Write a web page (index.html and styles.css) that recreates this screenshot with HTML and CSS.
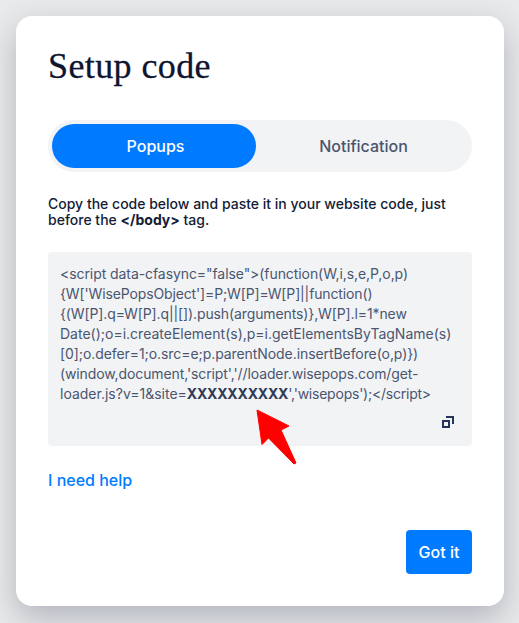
FILE: index.html
```html
<!DOCTYPE html>
<html lang="en">
<head>
<meta charset="utf-8">
<title>Setup code</title>
<link rel="stylesheet" href="styles.css">
</head>
<body>
<main class="card">
  <h1 class="title">Setup code</h1>
  <div class="tabs">
    <button class="tab tab-active">Popups</button>
    <button class="tab">Notification</button>
  </div>
  <p class="intro">Copy the code below and paste it in your website code, just before the <strong>&lt;/body&gt;</strong> tag.</p>
  <div class="code">
    <p class="code-text">
      <span class="code-line tight-s">&lt;script data-cfasync="false"&gt;(function(W,i,s,e,P,o,p)</span>
      <span class="code-line tight-l">{W['WisePopsObject']=P;W[P]=W[P]||function()</span>
      <span class="code-line tight-m">{(W[P].q=W[P].q||[]).push(arguments)},W[P].l=1*new</span>
      <span class="code-line">Date();o=i.createElement(s),p=i.getElementsByTagName(s)</span>
      <span class="code-line tight-s">[0];o.defer=1;o.src=e;p.parentNode.insertBefore(o,p)})</span>
      <span class="code-line tight-m">(window,document,'script','//loader.wisepops.com/get-</span>
      <span class="code-line">loader.js?v=1&amp;site=<b class="site">XXXXXXXXXX</b><span class="tight-x">','wisepops');&lt;/script&gt;</span></span>
    </p>
    <div class="copy-row">
      <svg class="copy-icon" width="12" height="12" viewBox="0 0 12 12" fill="none" stroke="#24335a" stroke-width="2"><rect x="1" y="5" width="6" height="6"/><path d="M4 1h7v7"/></svg>
    </div>
    <svg class="arrow" width="42" height="56" viewBox="0 0 42 56"><path d="M1 1 L33 17 L25 21 L40 54 L38 55 L12.500 29 L6 35.500 Z" fill="#ff0000" stroke="#ff0000" stroke-width="1" stroke-linejoin="round"/></svg>
  </div>
  <a class="help" href="#">I need help</a>
  <div class="footer">
    <button class="got-it">Got it</button>
  </div>
</main>
</body>
</html>
```
FILE: styles.css
```css
* {
  box-sizing: border-box;
}

html,
body {
  margin: 0;
  height: 100%;
}

body {
  background: #e9eaeb;
  padding: 16px 15px 17px 16px;
  font-family: Inter, "Liberation Sans", sans-serif;
  overflow: hidden;
}

.card {
  width: 488px;
  height: 590px;
  padding: 32px;
  background: #fff;
  border-radius: 16px;
  box-shadow: 0 12px 32px 0 rgba(45, 55, 80, 0.3);
}

.title {
  margin: 0;
  height: 36px;
  font-family: "Liberation Serif", serif;
  font-size: 36px;
  font-weight: 400;
  line-height: 36px;
  letter-spacing: 0.4px;
  color: #0d1530;
  -webkit-text-stroke: 0.3px #0d1530;
}

.tabs {
  display: flex;
  margin-top: 36px;
  height: 52px;
  padding: 4px;
  background: #f2f3f5;
  border-radius: 26px;
}

.tab {
  flex: 0 0 204px;
  height: 44px;
  padding: 0 0 0 3px;
  border: 0;
  border-radius: 22px;
  background: transparent;
  font-family: inherit;
  font-size: 16px;
  font-weight: 500;
  color: #4a5670;
}

.tab + .tab {
  flex: 1;
}

.tab-active {
  background: #007bff;
  color: #fff;
}

.intro {
  margin: 24px 0 0;
  font-size: 14px;
  font-weight: 500;
  line-height: 16px;
  color: #141c36;
}

.intro strong {
  font-weight: 700;
}

.code {
  position: relative;
  margin-top: 24px;
  height: 194px;
  padding: 12px;
  background: #f2f3f5;
  border-radius: 4px;
}

.code-text {
  margin: 0;
  font-size: 14px;
  line-height: 20px;
  color: #4a5670;
  white-space: nowrap;
}

.code-line {
  display: block;
}

.tight-s {
  letter-spacing: -0.075px;
}

.tight-m {
  letter-spacing: -0.11px;
}

.tight-l {
  letter-spacing: -0.136px;
}

.tight-x {
  letter-spacing: -0.23px;
}

.site {
  font-weight: 700;
  letter-spacing: -0.2px;
  color: #2f3a56;
}

.copy-row {
  display: flex;
  justify-content: flex-end;
  margin-top: 12px;
  padding-right: 6px;
}

.copy-icon {
  display: block;
}

.arrow {
  position: absolute;
  left: 207.500px;
  top: 157px;
}

.help {
  display: block;
  margin-top: 24px;
  font-size: 16px;
  font-weight: 500;
  line-height: 20px;
  color: #007bff;
  text-decoration: none;
}

.footer {
  display: flex;
  justify-content: flex-end;
  margin-top: 40px;
}

.got-it {
  width: 66px;
  height: 44px;
  border: 0;
  border-radius: 4px;
  background: #007bff;
  font-family: inherit;
  font-size: 16px;
  font-weight: 500;
  color: #fff;
}
```
